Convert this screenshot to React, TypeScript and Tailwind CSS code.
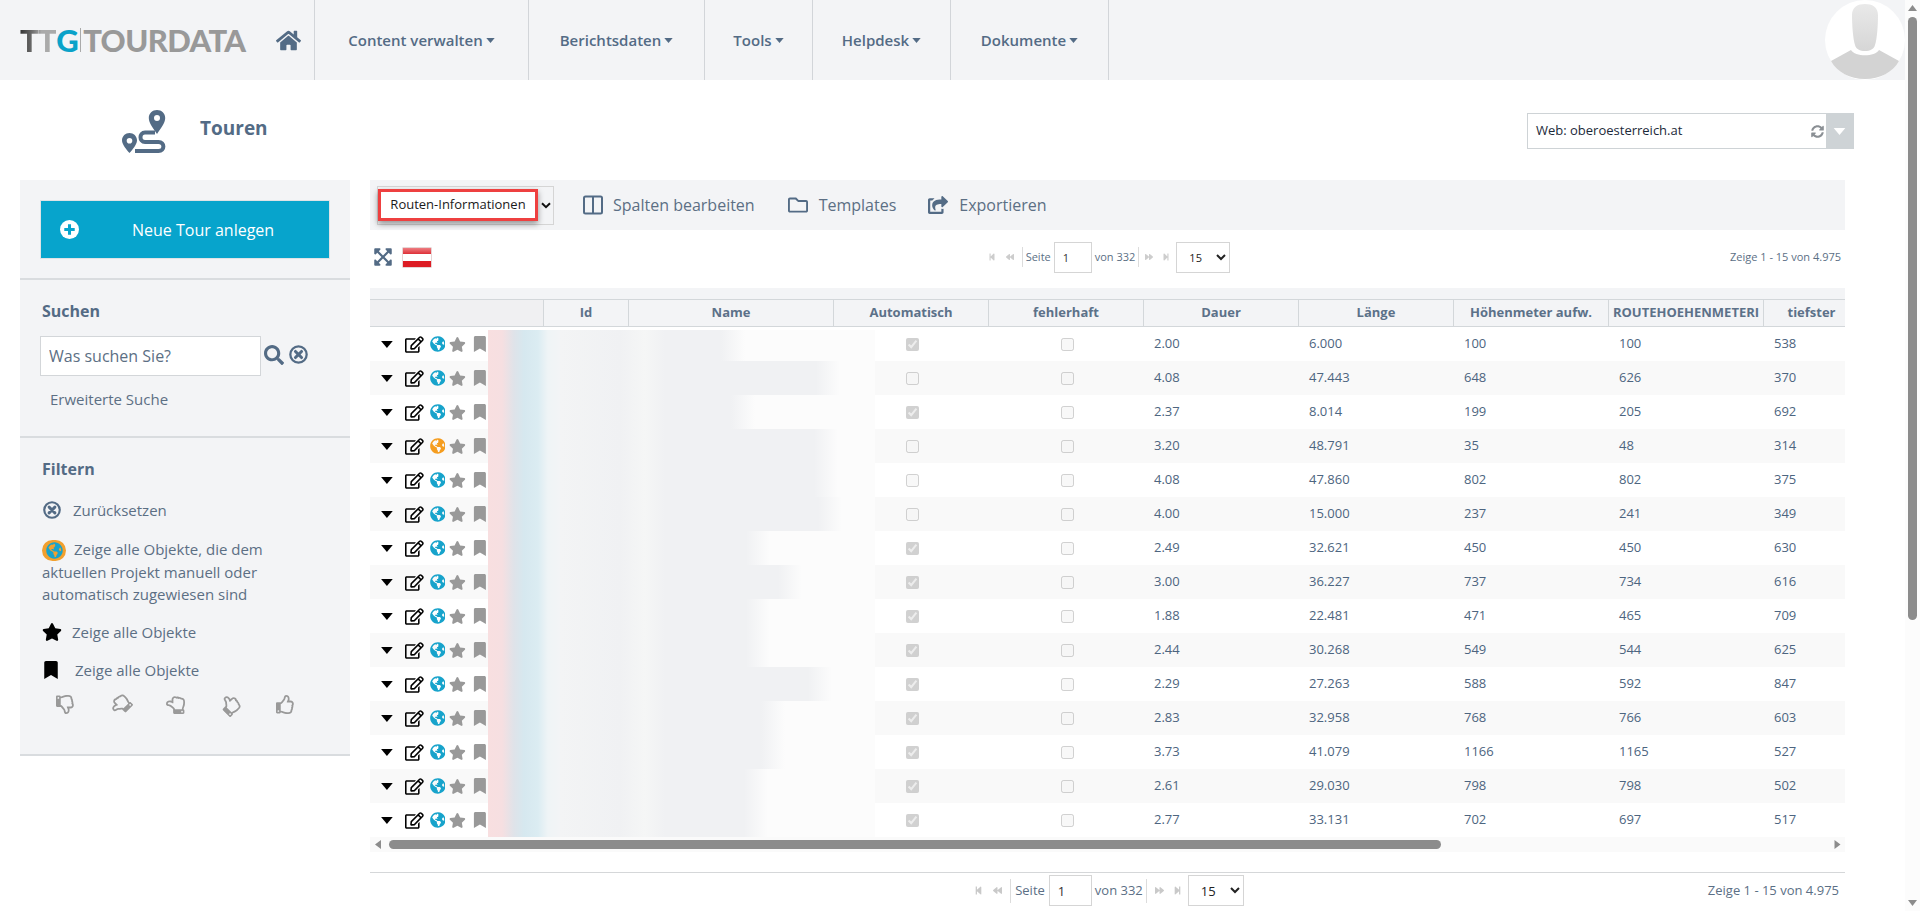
import React from "react";
import {
  FaHome, FaSearch, FaRegEdit, FaGlobeAmericas, FaStar, FaBookmark, FaRegThumbsUp,
  FaRegFolder, FaShareSquare, FaExpandArrowsAlt, FaSyncAlt, FaStepBackward, FaBackward, FaForward, FaStepForward,
} from "react-icons/fa";

type Row = { auto: boolean; d: string; l: string; h: string; r: string; t: string; end: number; orange?: boolean };

const rows: Row[] = [
  { auto: true, d: "2.00", l: "6.000", h: "100", r: "100", t: "538", end: 745 },
  { auto: false, d: "4.08", l: "47.443", h: "648", r: "626", t: "370", end: 840 },
  { auto: true, d: "2.37", l: "8.014", h: "199", r: "205", t: "692", end: 755 },
  { auto: false, d: "3.20", l: "48.791", h: "35", r: "48", t: "314", end: 838, orange: true },
  { auto: false, d: "4.08", l: "47.860", h: "802", r: "802", t: "375", end: 838 },
  { auto: false, d: "4.00", l: "15.000", h: "237", r: "241", t: "349", end: 842 },
  { auto: true, d: "2.49", l: "32.621", h: "450", r: "450", t: "630", end: 770 },
  { auto: true, d: "3.00", l: "36.227", h: "737", r: "734", t: "616", end: 802 },
  { auto: true, d: "1.88", l: "22.481", h: "471", r: "465", t: "709", end: 770 },
  { auto: true, d: "2.44", l: "30.268", h: "549", r: "544", t: "625", end: 770 },
  { auto: true, d: "2.29", l: "27.263", h: "588", r: "592", t: "847", end: 832 },
  { auto: true, d: "2.83", l: "32.958", h: "768", r: "766", t: "603", end: 785 },
  { auto: true, d: "3.73", l: "41.079", h: "1166", r: "1165", t: "527", end: 785 },
  { auto: true, d: "2.61", l: "29.030", h: "798", r: "798", t: "502", end: 768 },
  { auto: true, d: "2.77", l: "33.131", h: "702", r: "697", t: "517", end: 768 },
];

function Caret({ className }: { className: string }) {
  return (
    <svg viewBox="0 0 10 6" className={className} fill="currentColor">
      <polygon points="0,0 10,0 5,6" />
    </svg>
  );
}

function CircleX({ className }: { className: string }) {
  return (
    <svg viewBox="0 0 20 20" className={className}>
      <circle cx="10" cy="10" r="8.6" fill="none" stroke="currentColor" strokeWidth="2.4" />
      <path d="M6.8 6.8 13.2 13.2M13.2 6.8 6.8 13.2" stroke="currentColor" strokeWidth="3.2" strokeLinecap="round" />
    </svg>
  );
}

function NavItem({ label, className }: { label: string; className: string }) {
  return (
    <div className={`h-20 flex items-center justify-center gap-[3px] border-r border-[#d2d5d9] text-[15px] font-semibold text-[#536b85] ${className}`}>
      <span>{label}</span>
      <Caret className="w-[9px] h-[5px] mt-[1px]" />
    </div>
  );
}

function Pager({ big }: { big: boolean }) {
  const icon = big ? "text-[#c9c9c9] text-[9px]" : "text-[#cdcdcd] text-[8px]";
  return (
    <div className={`flex items-center ${big ? "text-[13px]" : "text-[11px]"} text-[#5b6f85]`}>
      <FaStepBackward className={icon} />
      <FaBackward className={`${icon} ${big ? "ml-[10px]" : "ml-[10px]"}`} />
      <span className={`border-l border-[#dcdcdc] ${big ? "ml-2 pl-[4px] h-6" : "ml-2 pl-[3px] h-5"} flex items-center`}>Seite</span>
      <input
        defaultValue="1"
        className={`${big ? "w-[43px] h-[31px] ml-[4px] pl-2 text-[13px]" : "w-[38px] h-[31px] ml-[3px] pl-2 text-[11px]"} border border-[#d5d5d5] bg-white text-[#333] outline-none`}
      />
      <span className="ml-[3px]">von 332</span>
      <span className={`border-l border-[#dcdcdc] ml-[3px] ${big ? "h-6 mr-2" : "h-5 mr-[6px]"}`} />
      <FaForward className={icon} />
      <FaStepForward className={`${icon} ml-[9px]`} />
      <select
        defaultValue="15"
        className={`${big ? "w-[56px] ml-[6px] pl-2 text-[13px]" : "w-[54px] ml-[6px] pl-2 text-[11px]"} h-[31px] border border-[#d5d5d5] bg-white text-[#222] outline-none`}
      >
        <option value="15">15</option>
      </select>
    </div>
  );
}

function Icons({ orange }: { orange?: boolean }) {
  return (
    <div className="flex-none w-[118px] h-full flex items-center pl-[11px]">
      <Caret className="w-[12px] h-[7px] text-black" />
      <FaRegEdit className="ml-[12px] text-[19px] text-black" />
      <FaGlobeAmericas className={`ml-[6px] text-[16px] ${orange ? "text-[#f59d1f]" : "text-[#17a3cb]"}`} />
      <FaStar className="ml-[4px] text-[17px] text-[#999]" />
      <FaBookmark className="ml-[6px] text-[16px] text-[#999]" />
    </div>
  );
}

function Cell({ v, last }: { v: string; last?: boolean }) {
  return <div className={`flex-none ${last ? "w-[81px]" : "w-[155px]"} pl-[9px] text-[13px] text-[#4d6580]`}>{v}</div>;
}

function Th({ label, className }: { label: string; className: string }) {
  return <div className={`flex-none h-full flex items-center justify-center border-r border-[#d3d7da] whitespace-nowrap overflow-hidden ${className}`}>{label}</div>;
}

function ThumbRow() {
  return (
    <div className="mt-[14px] flex items-center text-[#999] text-[19px] pl-[14px] gap-[36px]">
      <FaRegThumbsUp className="rotate-180 -scale-x-100" />
      <FaRegThumbsUp className="-rotate-[135deg]" />
      <FaRegThumbsUp className="-rotate-90" />
      <FaRegThumbsUp className="-rotate-45" />
      <FaRegThumbsUp />
    </div>
  );
}

export default function App() {
  return (
    <div className="flex h-[911px] w-[1920px] overflow-hidden bg-white font-['Open_Sans',sans-serif] text-[#536b85]">
      <div className="w-[1905px] flex-none">
        {/* top bar */}
        <header className="h-20 bg-[#f3f4f6] flex">
          <div className="w-[315px] flex-none flex items-center border-r border-[#d2d5d9] pl-5">
            <span className="font-['Lato',sans-serif] font-black text-[31px] leading-none tracking-[-0.6px] flex items-center">
              <span className="bg-[linear-gradient(90deg,#333,#666_30%,#aaa_60%)] bg-clip-text text-transparent">TT</span>
              <span className="text-[#0aa2c9]">G</span>
              <span className="w-px h-[24px] bg-[#aaa] mx-[2px]" />
              <span className="text-[#999]">TOURDATA</span>
            </span>
            <FaHome className="ml-[30px] text-[25px] text-[#536b85]" />
          </div>
          <NavItem label="Content verwalten" className="w-[214px]" />
          <NavItem label="Berichtsdaten" className="w-[176px]" />
          <NavItem label="Tools" className="w-[108px]" />
          <NavItem label="Helpdesk" className="w-[138px]" />
          <NavItem label="Dokumente" className="w-[158px]" />
          <div className="flex-1 flex justify-end">
            <svg viewBox="0 0 80 80" className="w-20 h-20">
              <defs>
                <linearGradient id="face" x1="0" y1="0" x2="0" y2="1">
                  <stop offset="0" stopColor="#e9e9e9" />
                  <stop offset="1" stopColor="#d6d6d6" />
                </linearGradient>
              </defs>
              <circle cx="40" cy="40" r="40" fill="#fff" />
              <path d="M27 15C27 7 33 4 40 4s13 3 13 11c0 10-1 24-3 30-1 4-5 6-10 6s-9-2-10-6c-2-6-3-20-3-30Z" fill="url(#face)" />
              <path d="M26 50c4 7 24 7 28 0l20 11c-6 11-19 18-34 18S12 72 6 61Z" fill="#d3d3d3" />
            </svg>
          </div>
        </header>

        {/* title row */}
        <div className="h-[100px] flex items-start justify-between pr-[51px]">
          <div className="flex items-center pl-[122px] pt-[30px]">
            <svg viewBox="0 0 44 43" className="w-[44px] h-[43px]" fill="#536b85">
              <path fillRule="evenodd" d="M35 0c4.6 0 8.2 3.5 8.2 8 0 5-4.8 11-8.2 16-3.4-5-8.2-11-8.2-16 0-4.5 3.6-8 8.2-8Zm0 5a3 3 0 1 0 0 6 3 3 0 0 0 0-6Z" />
              <path fillRule="evenodd" d="M7.5 23C11.6 23 15 26.200 15 30.200 15 34.500 10.500 39.500 7.500 43 4.500 39.500 0 34.500 0 30.200 0 26.200 3.400 23 7.500 23Zm0 5a2.800 2.800 0 1 0 0 5.600 2.800 2.800 0 0 0 0-5.600Z" />
              <path d="M33 22.500H23c-6 0-6 9.500 0 9.500h13.500c6.500 0 6.500 9 0 9H13" fill="none" stroke="#536b85" strokeWidth="4" />
            </svg>
            <span className="ml-[34px] text-[19px] font-bold text-[#536b85] -mt-[6px]">Touren</span>
          </div>
          <div className="mt-[33px] w-[327px] h-[36px] border border-[#ced3d6] flex items-center pl-2 text-[13px] text-[#1c2a3a]">
            <span className="flex-1">Web: oberoesterreich.at</span>
            <FaSyncAlt className="text-[13px] text-[#8a8f94] mr-[2px]" />
            <div className="w-[27px] h-full bg-[#ced3d6] flex items-center justify-center text-white">
              <Caret className="w-[13px] h-[7px]" />
            </div>
          </div>
        </div>

        <div className="flex pl-5">
          {/* sidebar */}
          <aside className="w-[330px] flex-none h-[576px] bg-[#f3f4f6] border-b-2 border-[#d9dcdf] self-start">
            <div className="h-[100px] border-b-2 border-[#d9dcdf] px-5 pt-5">
              <div className="h-[59px] bg-[#07a4cc] border border-[#dfe3e6] flex items-center pl-[19px] text-white text-[16px]">
                <svg viewBox="0 0 20 20" className="w-[19px] h-[19px]">
                  <circle cx="10" cy="10" r="10" fill="#fff" />
                  <path d="M10 4.500v11M4.500 10h11" stroke="#07a4cc" strokeWidth="3.200" />
                </svg>
                <span className="ml-[53px]">Neue Tour anlegen</span>
              </div>
            </div>
            <div className="h-[158px] border-b-2 border-[#d9dcdf] pt-[19px] pl-5">
              <h3 className="pl-[2px] text-[16px] leading-[24px] font-bold text-[#536b85]">Suchen</h3>
              <div className="mt-[13px] flex items-center">
                <input
                  placeholder="Was suchen Sie?"
                  className="w-[221px] h-10 border border-[#d3d6d9] bg-white pl-2 text-[16px] text-[#5c6f84] placeholder:text-[#5c6f84] outline-none"
                />
                <FaSearch className="ml-[3px] -mt-[3px] text-[20px] text-[#536b85]" />
                <CircleX className="ml-[5px] -mt-[3px] w-[19px] h-[19px] text-[#536b85]" />
              </div>
              <div className="mt-[12px] pl-[10px] text-[15px] leading-[22px] text-[#5c6f84]">Erweiterte Suche</div>
            </div>
            <div className="pl-[22px] pt-[19px] text-[15px] leading-[22px] text-[#5c6f84]">
              <h3 className="text-[16px] leading-[24px] font-bold text-[#536b85]">Filtern</h3>
              <div className="mt-[18px] flex items-center">
                <CircleX className="ml-px w-[18px] h-[18px] text-[#536b85]" />
                <span className="ml-[12px]">Zurücksetzen</span>
              </div>
              <p className="mt-[17px] w-[270px]">
                <span className="inline-flex align-[-4px] items-center justify-center w-[24px] h-[21px] rounded-full bg-[#f2a02e] mr-[8px]">
                  <FaGlobeAmericas className="text-[17px] text-[#17a3cb]" />
                </span>
                Zeige alle Objekte, die dem aktuellen Projekt manuell oder automatisch zugewiesen sind
              </p>
              <div className="mt-[16px] flex items-center">
                <FaStar className="text-[20px] text-black" />
                <span className="ml-[10px]">Zeige alle Objekte</span>
              </div>
              <div className="mt-[16px] flex items-center">
                <FaBookmark className="text-[18px] text-black" />
                <span className="ml-[15px]">Zeige alle Objekte</span>
              </div>
              <ThumbRow />
            </div>
          </aside>

          {/* main */}
          <main className="ml-5 w-[1475px] flex-none">
            <div className="h-[50px] bg-[#f3f4f6] flex items-center pl-[7px] text-[16px] text-[#5c6f84]">
              <div className="w-[177px] h-[39px] border border-[#d5d5d5] flex items-center">
                <div className="w-[160px] h-[32px] border-[3px] border-[#ee4040] bg-white flex items-center justify-center text-[13px] text-[#1a1a1a] shadow-[0_3px_6px_rgba(0,0,0,0.4)]">
                  Routen-Informationen
                </div>
                <svg viewBox="0 0 10 7" className="ml-[3px] w-[10px] h-[7px]">
                  <path d="M1 1.200 5 5.200 9 1.200" fill="none" stroke="#111" strokeWidth="2" />
                </svg>
              </div>
              <svg viewBox="0 0 20 20" className="ml-[29px] w-5 h-5" fill="none" stroke="#536b85" strokeWidth="2">
                <rect x="1" y="1.500" width="18" height="17" rx="1.500" />
                <path d="M10 1.500v17" />
              </svg>
              <span className="ml-[10px]">Spalten bearbeiten</span>
              <FaRegFolder className="ml-[33px] text-[20px] text-[#536b85]" />
              <span className="ml-[11px]">Templates</span>
              <FaShareSquare className="ml-[32px] text-[20px] text-[#536b85]" />
              <span className="ml-[11px]">Exportieren</span>
            </div>

            <div className="h-[58px] grid grid-cols-[1fr_auto_1fr] items-center pb-[4px]">
              <div className="flex items-center pl-[3px]">
                <FaExpandArrowsAlt className="text-[20px] text-[#536b85]" />
                <div className="ml-[9px] w-[30px] h-[21px] rounded-[1px] border border-[#e6d5d5] bg-[linear-gradient(180deg,#ee7d82_0,#dd2c33_33%,#fff_33%,#fff_66%,#dd1c24_66%)]" />
              </div>
              <div className="pl-[3px]"><Pager big={false} /></div>
              <div className="text-right pr-1 text-[11px] text-[#5b6f85]">Zeige 1 - 15 von 4.975</div>
            </div>

            <div className="h-[11px] bg-[#f3f4f6]" />
            <div className="h-[28px] flex bg-[#f3f4f6] border-y-[1.5px] border-[#d3d7da] text-[13px] font-bold text-[#5c7189] overflow-hidden">
              <Th label="" className="w-[174px] bg-[#f0f0f2]" />
              <Th label="Id" className="w-[85px]" />
              <Th label="Name" className="w-[205px]" />
              <Th label="Automatisch" className="w-[155px]" />
              <Th label="fehlerhaft" className="w-[155px]" />
              <Th label="Dauer" className="w-[155px]" />
              <Th label="Länge" className="w-[155px]" />
              <Th label="Höhenmeter aufw." className="w-[155px]" />
              <Th label="ROUTEHOEHENMETERI" className="w-[155px]" />
              <div className="flex-1 text-center whitespace-nowrap pt-[3px] pl-[14px]">tiefster</div>
            </div>

            {rows.map((r, i) => (
              <div key={i} className={`h-[34px] flex items-center overflow-hidden ${i % 2 ? "bg-[#f9f9f9]" : "bg-white"}`}>
                <Icons orange={r.orange} />
                <div className={`flex-none w-[387px] flex bg-[#fcfcfc] ${i === 0 ? "h-[31px] mt-[3px]" : "h-[34px]"}`}>
                  <div className="w-[72px] h-full flex-none bg-[linear-gradient(90deg,#f8dfe0_0,#f6dfe1_14px,#dfe3e9_26px,#d6e8ef_36px,#dbecf2_50px,#eff4f6_60px,#f3f4f6_72px)]" />
                  <div
                    className="h-full bg-[linear-gradient(90deg,#f3f4f5,#f0f1f3_60px,#f5f6f6_85px,#f0f1f3_105px,#f0f1f3_calc(100%-24px),transparent)]"
                    style={{ width: r.end - 560 }}
                  />
                </div>
                <div className="flex-none w-[115px] pl-[31px] flex items-center">
                  <input type="checkbox" disabled checked={r.auto} readOnly className="m-0" />
                </div>
                <div className="flex-none w-[155px] flex justify-center pr-px">
                  <input type="checkbox" disabled className="m-0" />
                </div>
                <Cell v={r.d} />
                <Cell v={r.l} />
                <Cell v={r.h} />
                <Cell v={r.r} />
                <Cell v={r.t} last />
              </div>
            ))}

            {/* horizontal scrollbar */}
            <div className="h-[15px] bg-[#fafafa] flex items-center pl-[5px] pr-[4px]">
              <svg viewBox="0 0 6 9" className="w-[6px] h-[9px] text-[#8c8c8c]" fill="currentColor"><polygon points="6,0 6,9 0,4.500" /></svg>
              <div className="ml-[8px] w-[1052px] h-[9px] rounded-full bg-[#8c8c8c]" />
              <div className="flex-1" />
              <svg viewBox="0 0 6 9" className="w-[7px] h-[9px] text-[#8c8c8c]" fill="currentColor"><polygon points="0,0 0,9 6,4.500" /></svg>
            </div>

            <div className="mt-5 border-t-[1.5px] border-[#d5d7d9] pt-[2px] grid grid-cols-[1fr_auto_1fr] items-center">
              <div />
              <div className="pl-[3px]"><Pager big /></div>
              <div className="text-right pr-[6px] text-[13px] text-[#5b6f85]">Zeige 1 - 15 von 4.975</div>
            </div>
          </main>
        </div>
      </div>

      {/* page scrollbar */}
      <div className="w-[15px] flex-none h-full bg-[#fcfcfc] flex flex-col items-center pt-[5px] text-[#8c8c8c] pr-[1px]">
        <svg viewBox="0 0 9 6" className="w-[9px] h-[6px]" fill="currentColor"><polygon points="0,6 9,6 4.500,0" /></svg>
        <div className="mt-[6px] w-[9px] h-[603px] rounded-full bg-[#8c8c8c]" />
        <div className="flex-1" />
        <svg viewBox="0 0 9 6" className="w-[9px] h-[6px] mb-[5px]" fill="currentColor"><polygon points="0,0 9,0 4.500,6" /></svg>
      </div>
    </div>
  );
}
